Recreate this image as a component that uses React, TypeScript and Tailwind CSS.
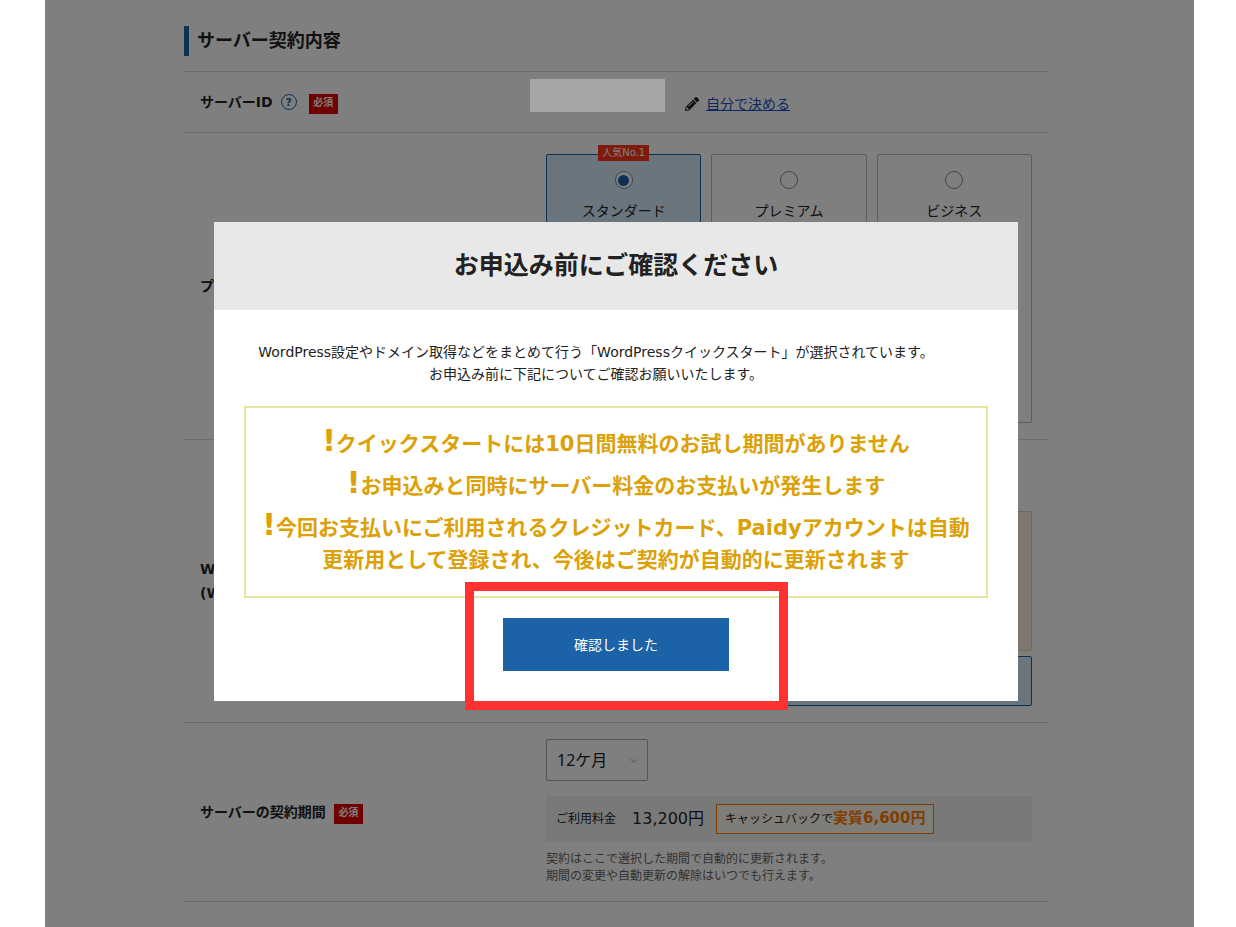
import React, { useState } from 'react';
import { FaPencilAlt } from 'react-icons/fa';
import { FiChevronDown } from 'react-icons/fi';

const plans = [
    { id: 'standard', label: 'スタンダード', popular: true },
    { id: 'premium', label: 'プレミアム', popular: false },
    { id: 'business', label: 'ビジネス', popular: false },
];

const RequiredBadge: React.FC = () => (
    <span className="mt-[3px] flex h-5 w-[29px] items-center justify-center bg-[#e00000] text-[10px] font-bold text-white">
        必須
    </span>
);

type RowProps = {
    label: React.ReactNode;
    children: React.ReactNode;
};

const FormRow: React.FC<RowProps> = ({ label, children }) => (
    <div className="grid grid-cols-[346px_1fr] items-center border-t border-[#d6d6d6]">
        <div className="flex items-center pl-4 text-sm font-bold">{label}</div>
        {children}
    </div>
);

const ExclamationMark: React.FC = () => (
    <span className="text-3xl leading-5">!</span>
);

const ConfirmDialog: React.FC = () => (
    <div
        role="dialog"
        aria-labelledby="confirm-title"
        className="w-full max-w-[804px] bg-white"
    >
        <h2
            id="confirm-title"
            className="bg-[#e8e8e8] py-7 text-center text-[25px] leading-8 font-bold"
        >
            お申込み前にご確認ください
        </h2>
        <div className="px-[30px] pt-[31px] pb-[30px]">
            <p className="max-w-[704px] text-center text-sm leading-[22px]">
                WordPress設定やドメイン取得などをまとめて行う「WordPressクイックスタート」が選択されています。
                <br />
                お申込み前に下記についてご確認お願いいたします。
            </p>
            <ul className="mt-[21px] flex flex-col gap-[10px] border-2 border-[#e9e5a0] py-5 text-center text-[21px] leading-8 font-bold text-[#dba106]">
                <li>
                    <ExclamationMark />
                    クイックスタートには10日間無料のお試し期間がありません
                </li>
                <li>
                    <ExclamationMark />
                    お申込みと同時にサーバー料金のお支払いが発生します
                </li>
                <li>
                    <ExclamationMark />
                    今回お支払いにご利用されるクレジットカード、Paidyアカウントは自動
                    <br />
                    更新用として登録され、今後はご契約が自動的に更新されます
                </li>
            </ul>
            <div className="mt-5 flex justify-center">
                <div className="relative">
                    <button
                        type="button"
                        className="h-[53px] w-[226px] bg-[#1b62a6] text-sm text-white"
                    >
                        確認しました
                    </button>
                    {/* highlight frame around the button */}
                    <div className="pointer-events-none absolute -top-9 -right-[59px] -bottom-[39px] -left-[38px] border-[9px] border-[#ff3131]" />
                </div>
            </div>
        </div>
    </div>
);

const App: React.FC = (): React.ReactElement => {
    const [plan, setPlan] = useState<string>('standard');
    const [period, setPeriod] = useState<string>('12');

    return (
        <div className="min-h-screen bg-white pr-[42px] pl-[45px] font-['DejaVu_Sans','Noto_Sans_CJK_JP',sans-serif] text-[#222]">
            <main className="relative min-h-screen overflow-hidden pr-[7px]">
                <form className="mx-auto max-w-[864px] pt-[26px]">
                    <h1 className="mb-[15px] border-l-[5px] border-[#1b62a6] pl-2 text-lg leading-[30px] font-bold">
                        サーバー契約内容
                    </h1>

                    <FormRow
                        label={
                            <>
                                サーバーID
                                <button
                                    type="button"
                                    aria-label="サーバーIDについて"
                                    className="mr-3 ml-2 flex size-4 items-center justify-center rounded-full border border-[#1b62a6] text-[11px] leading-none font-bold text-[#1b62a6]"
                                >
                                    ?
                                </button>
                                <RequiredBadge />
                            </>
                        }
                    >
                        <div className="flex h-[60px] items-center pt-1">
                            <div className="relative z-20 mb-[18px] h-[33px] w-[135px] bg-[#a6a6a6]" />
                            <FaPencilAlt className="mr-[7px] ml-5 size-[14px]" />
                            <a href="#" className="text-sm text-[#1450c8] underline">
                                自分で決める
                            </a>
                        </div>
                    </FormRow>

                    <FormRow label="プラン">
                        <div className="grid grid-cols-3 gap-[10px] px-4 pt-[21px] pb-4">
                            {plans.map((item) => (
                                <label
                                    key={item.id}
                                    className={`relative flex h-[269px] flex-col items-center rounded-xs border pt-4 text-sm ${
                                        plan === item.id
                                            ? 'border-[#1b62a6] bg-[#d4eafc]'
                                            : 'border-[#bbb]'
                                    }`}
                                >
                                    {item.popular && (
                                        <span className="absolute -top-[10px] bg-[#ff3719] px-1 text-[10px] leading-4 text-white">
                                            人気No.1
                                        </span>
                                    )}
                                    <input
                                        type="radio"
                                        name="plan"
                                        value={item.id}
                                        checked={plan === item.id}
                                        onChange={() => setPlan(item.id)}
                                        className="mb-3 flex size-[18px] shrink-0 appearance-none items-center justify-center rounded-full border border-[#888] bg-white checked:before:size-[11px] checked:before:rounded-full checked:before:bg-[#1b62a6]"
                                    />
                                    {item.label}
                                </label>
                            ))}
                        </div>
                    </FormRow>

                    <FormRow
                        label={
                            <span className="leading-6">
                                WordPress
                                <br />
                                (WordPressクイックスタート)
                            </span>
                        }
                    >
                        <div className="flex flex-col gap-[5px] px-4 pt-[71px] pb-4">
                            <div className="h-[140px] rounded-xs border border-[#e0d4a8] bg-[#fdf1e2]" />
                            <div className="h-[50px] rounded-xs border border-[#1b62a6] bg-[#d4eafc]" />
                        </div>
                    </FormRow>

                    <FormRow
                        label={
                            <>
                                <label htmlFor="period" className="mr-2">
                                    サーバーの契約期間
                                </label>
                                <RequiredBadge />
                            </>
                        }
                    >
                        <div className="px-4 py-4">
                            <div className="relative w-[102px]">
                                <select
                                    id="period"
                                    value={period}
                                    onChange={(e) => setPeriod(e.target.value)}
                                    className="h-[42px] w-full appearance-none rounded-xs border border-[#aaa] bg-white pl-[10px] font-['Noto_Sans','Noto_Sans_CJK_JP',sans-serif] text-base"
                                >
                                    <option value="3">3ケ月</option>
                                    <option value="6">6ケ月</option>
                                    <option value="12">12ケ月</option>
                                </select>
                                <FiChevronDown className="pointer-events-none absolute top-4 right-2 size-3 text-[#999]" />
                            </div>
                            <div className="mt-[15px] flex h-[46px] items-center bg-[#f2f2f2] px-[10px] text-xs">
                                ご利用料金
                                <span className="mr-3 ml-4 text-base">13,200円</span>
                                <span className="flex h-[30px] items-center border border-[#ff7a00] bg-[#fffaf0] px-2">
                                    キャッシュバックで
                                    <strong className="text-[15px] text-[#ff7a00]">実質6,600円</strong>
                                </span>
                            </div>
                            <p className="mt-[9px] text-xs leading-[17px] text-[#666]">
                                契約はここで選択した期間で自動的に更新されます。
                                <br />
                                期間の変更や自動更新の解除はいつでも行えます。
                            </p>
                        </div>
                    </FormRow>
                    <div className="border-t border-[#d6d6d6]" />
                </form>

                <div className="absolute inset-0 z-10 bg-black/50" />
                <div className="absolute inset-0 z-30 flex items-start justify-center pt-[222px] pr-[7px]">
                    <ConfirmDialog />
                </div>
            </main>
        </div>
    );
};

export default App;
